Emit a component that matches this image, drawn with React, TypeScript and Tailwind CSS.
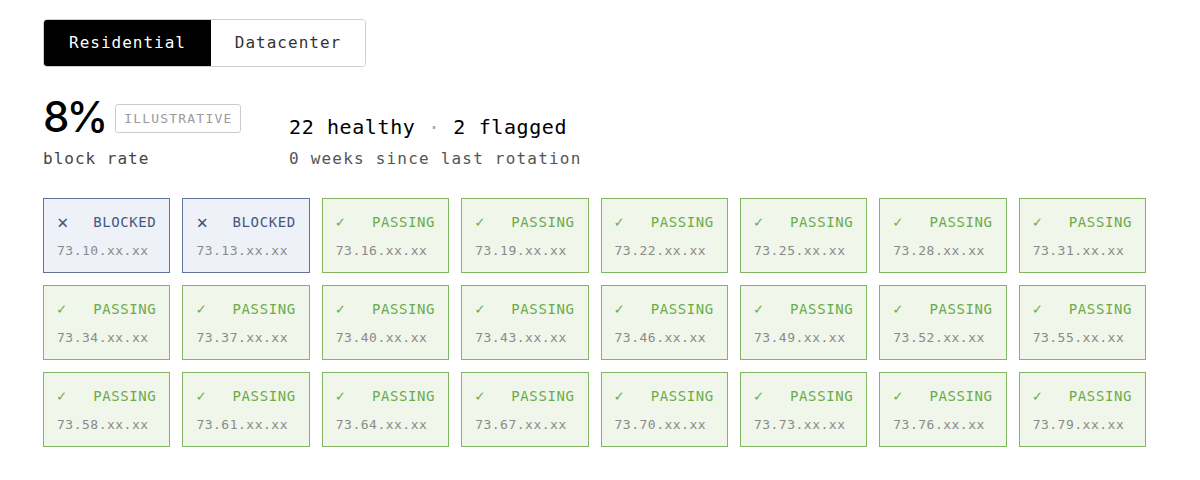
import { useState } from 'react';

const mono = { fontFamily: '"DejaVu Sans Mono", "Liberation Mono", monospace' };

const blocked = new Set([10, 13]);
const nodes = Array.from({ length: 24 }, (_, i) => 10 + i * 3);

function Node({ octet }: { octet: number }) {
  const isBlocked = blocked.has(octet);
  return (
    <div
      className={
        isBlocked
          ? 'h-[75px] border border-[#5f739b] bg-[#eef1f8] px-[13px] pt-[12px]'
          : 'h-[75px] border border-[#82b662] bg-[#f0f6ea] px-[13px] pt-[12px]'
      }
    >
      <div
        className={
          isBlocked
            ? 'flex h-[22px] items-center justify-between text-[14px] tracking-[0.6px] text-[#42587f]'
            : 'flex h-[22px] items-center justify-between text-[14px] tracking-[0.6px] text-[#6aac4b]'
        }
      >
        <span className={isBlocked ? 'text-[19px]' : 'text-[15px]'}>{isBlocked ? '×' : '✓'}</span>
        <span>{isBlocked ? 'BLOCKED' : 'PASSING'}</span>
      </div>
      <div className="mt-[8px] text-[13px] tracking-[0.5px] text-[#8a8a8a]">73.{octet}.xx.xx</div>
    </div>
  );
}

export default function App() {
  const [mode, setMode] = useState<'res' | 'dc'>('res');

  return (
    <div className="min-h-[480px] w-[1200px] bg-white pl-[43px] pt-[19px] text-black" style={mono}>
      {/* Segmented toggle */}
      <div className="flex h-[48px] w-[323px] overflow-hidden rounded-[4px] border border-[#cfcfcf]">
        <button
          onClick={() => setMode('res')}
          className={
            mode === 'res'
              ? 'w-[167px] bg-black text-[16px] tracking-[1px] text-white'
              : 'w-[167px] bg-white text-[16px] tracking-[1px] text-[#333]'
          }
        >
          Residential
        </button>
        <button
          onClick={() => setMode('dc')}
          className={
            mode === 'dc'
              ? 'flex-1 bg-black text-[16px] tracking-[1px] text-white'
              : 'flex-1 bg-white text-[16px] tracking-[1px] text-[#333]'
          }
        >
          Datacenter
        </button>
      </div>

      {/* Stats */}
      <div className="mt-[27px] flex">
        <div className="w-[246px]">
          <div className="flex items-start gap-[10px]">
            <span
              className="text-[42px] font-medium leading-[46px] tracking-[-3px]"
              style={{ fontFamily: 'Inter, "Liberation Sans", sans-serif' }}
            >
              8%
            </span>
            <span className="mt-[10px] rounded-[3px] border border-[#cdcdcd] px-[8px] py-[4px] text-[13px] leading-[19px] tracking-[1.2px] text-[#9a9a9a]">
              ILLUSTRATIVE
            </span>
          </div>
          <div className="mt-[7px] text-[16px] tracking-[1px] text-[#444]">block rate</div>
        </div>
        <div className="pt-[20px]">
          <div className="text-[20px] leading-[26px] tracking-[0.6px]">
            22 healthy <span className="text-[#aaa]">·</span> 2 flagged
          </div>
          <div className="mt-[7px] text-[16px] tracking-[1.2px] text-[#555]">0 weeks since last rotation</div>
        </div>
      </div>

      {/* Node grid */}
      <div className="mt-[27px] grid w-[1103px] grid-cols-8 gap-x-[12px] gap-y-[12px]">
        {nodes.map((n) => (
          <Node key={n} octet={n} />
        ))}
      </div>
    </div>
  );
}
